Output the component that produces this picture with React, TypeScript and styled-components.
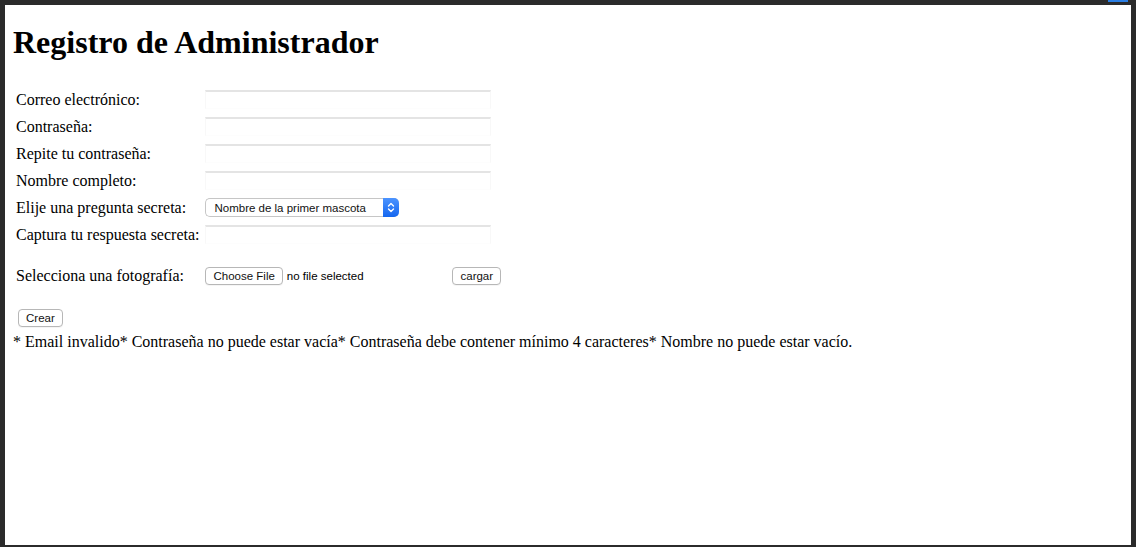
import React from 'react'
import styled, { createGlobalStyle } from 'styled-components'

const GlobalStyle = createGlobalStyle`
    html, body {
        margin: 0;
        padding: 0;
        background: #2b2b2b;
    }
`

const Frame = styled.div`
    height: 547px;
    display: flex;
    flex-direction: column;
    background: #2b2b2b;
`

const TopBar = styled.div`
    height: 5px;
    display: flex;
    justify-content: flex-end;
    align-items: flex-start;
    padding-right: 8px;
`

const TabMark = styled.div`
    width: 20px;
    height: 2px;
    background: #2a7ee3;
`

const Window = styled.div`
    flex: 1;
    display: flex;
    margin-bottom: 2px;
    border-left: 5px solid #2b2b2b;
    border-right: 5px solid #2b2b2b;
    box-shadow: inset 1px 0 0 #3c3c3c;
`

const Page = styled.div`
    flex: 1;
    background: #ffffff;
    padding: 0 8px;
    font-family: "Liberation Serif", "Times New Roman", serif;
    font-size: 16px;
    color: #000;
`

const Heading = styled.h1`
    font-size: 32px;
    font-weight: bold;
    line-height: 37px;
    margin: 19px 0 24px;
`

const FormTable = styled.table`
    border-spacing: 2px;
    border-collapse: separate;
`

const Cell = styled.td<{ $spacer?: boolean }>`
    padding: 1px;
    vertical-align: middle;
    white-space: nowrap;
    height: ${p => (p.$spacer ? '11px' : 'auto')};
`

const TextInput = styled.input`
    display: block;
    box-sizing: border-box;
    width: 286px;
    height: 19px;
    margin: 2px 0 2px 2px;
    border: 1px solid #f8f8f8;
    border-top: 2px solid #e4e4e4;
    border-bottom-color: #fdfdfd;
    background: #fff;
    outline: none;
    padding: 0 3px;
`

const SelectBox = styled.div`
    display: flex;
    box-sizing: border-box;
    width: 194px;
    height: 19px;
    margin: 2px 0 2px 2px;
    border: 1px solid #c6c6c6;
    border-right: none;
    border-radius: 5px;
    background: #fff;
    font-family: "Liberation Sans", Arial, sans-serif;
    font-size: 11.5px;
    color: #111;
`

const SelectText = styled.span`
    flex: 1;
    display: flex;
    align-items: center;
    padding-left: 8px;
`

const ArrowCap = styled.span`
    width: 16px;
    margin: -1px 0;
    display: flex;
    align-items: center;
    justify-content: center;
    border-radius: 0 5px 5px 0;
    background: linear-gradient(#4c94ff, #1466ef);
`

const Button = styled.button`
    box-sizing: border-box;
    height: 18px;
    margin: 2px 0;
    padding: 0 7px;
    border: 1px solid #b7b7b7;
    border-radius: 4px;
    background: #fff;
    box-shadow: 0 1px 0 rgba(0, 0, 0, 0.04);
    font-family: "Liberation Sans", Arial, sans-serif;
    font-size: 11.5px;
    color: #111;
    line-height: 16px;
`

const FileRow = styled.div`
    display: flex;
    align-items: center;
    margin-left: 2px;
`

const FilePicker = styled.div`
    width: 247px;
    display: flex;
    align-items: center;
    gap: 4px;
    font-family: "Liberation Sans", Arial, sans-serif;
    font-size: 11.5px;
`

const Actions = styled.div`
    padding-top: 17px;
    padding-left: 5px;
`

const Errors = styled.div`
    margin-top: 4px;
`

const fields = [
    'Correo electrónico:',
    'Contraseña:',
    'Repite tu contraseña:',
    'Nombre completo:',
]

const errors = [
    'Email invalido',
    'Contraseña no puede estar vacía',
    'Contraseña debe contener mínimo 4 caracteres',
    'Nombre no puede estar vacío.',
]

const Chevrons = () => (
    <svg width="8" height="11" viewBox="0 0 8 11" fill="none" stroke="#fff" strokeWidth="1.4" strokeLinecap="round" strokeLinejoin="round">
        <path d="M1.5 4 L4 1.5 L6.5 4" />
        <path d="M1.5 7 L4 9.5 L6.5 7" />
    </svg>
)

const App = () => {
    return (
        <Frame>
            <GlobalStyle />
            <TopBar>
                <TabMark />
            </TopBar>
            <Window>
                <Page>
                    <Heading>Registro de Administrador</Heading>
                    <FormTable>
                        <tbody>
                            {fields.map((label, index) => (
                                <tr key={index}>
                                    <Cell>{label}</Cell>
                                    <Cell>
                                        <TextInput type="text" />
                                    </Cell>
                                </tr>
                            ))}
                            <tr>
                                <Cell>Elije una pregunta secreta:</Cell>
                                <Cell>
                                    <SelectBox>
                                        <SelectText>Nombre de la primer mascota</SelectText>
                                        <ArrowCap>
                                            <Chevrons />
                                        </ArrowCap>
                                    </SelectBox>
                                </Cell>
                            </tr>
                            <tr>
                                <Cell>Captura tu respuesta secreta:</Cell>
                                <Cell>
                                    <TextInput type="text" />
                                </Cell>
                            </tr>
                            <tr>
                                <Cell $spacer />
                                <Cell $spacer />
                            </tr>
                            <tr>
                                <Cell>Selecciona una fotografía:</Cell>
                                <Cell>
                                    <FileRow>
                                        <FilePicker>
                                            <Button type="button">Choose File</Button>
                                            <span>no file selected</span>
                                        </FilePicker>
                                        <Button type="button">cargar</Button>
                                    </FileRow>
                                </Cell>
                            </tr>
                        </tbody>
                    </FormTable>
                    <Actions>
                        <Button type="button">Crear</Button>
                    </Actions>
                    <Errors>
                        {errors.map((e, i) => (
                            <span key={i}>* {e}</span>
                        ))}
                    </Errors>
                </Page>
            </Window>
        </Frame>
    )
}

export default App
